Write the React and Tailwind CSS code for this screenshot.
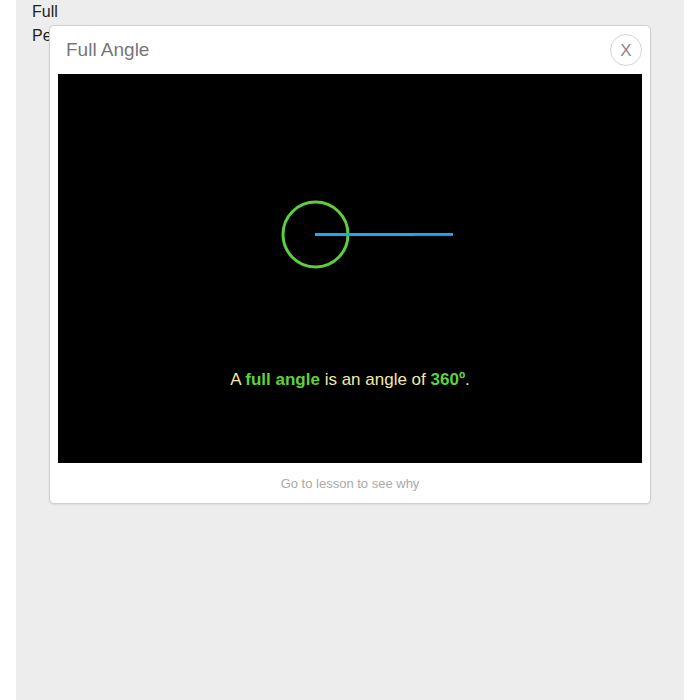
export default function App() {
  return (
    <div className="min-h-[700px] bg-white font-['Liberation_Sans',Arial,sans-serif]">
      <div className="relative mx-[16px] min-h-[700px] bg-[#ededed] pl-[16px] text-[16px] leading-[24px] text-[#222]">
        <div>Full</div>
        <div>Perigon</div>

        <div className="absolute left-[33px] top-[25px] w-[602px] rounded-[5px] border border-[#cfcfcf] bg-white shadow-[0_1px_2px_rgba(0,0,0,0.08)]">
          <div className="flex h-[48px] items-center justify-between pl-[16px] pr-[8px]">
            <h2 className="text-[19px] font-normal text-[#777]">Full Angle</h2>
            <button
              type="button"
              className="flex h-[32px] w-[32px] items-center justify-center rounded-full border border-[#d4d4d4] bg-white text-[17px] leading-none text-[#888]"
            >
              X
            </button>
          </div>

          <div className="mx-[8px] flex h-[389px] flex-col bg-black">
            <svg width="584" height="294" viewBox="0 0 584 294" className="block">
              <circle cx="257.5" cy="160.5" r="32.5" fill="none" stroke="#5ccf3a" strokeWidth="3" />
              <line x1="257" y1="160.5" x2="395" y2="160.5" stroke="#1ea6f2" strokeWidth="3" />
              <line x1="356" y1="161.5" x2="395" y2="161.5" stroke="#1890d8" strokeWidth="1" />
            </svg>
            <p className="text-center text-[17px] leading-[24px] text-[#f2e9a6]">
              A <span className="font-bold text-[#5fd23b]">full angle</span> is an angle of{" "}
              <span className="font-bold text-[#5fd23b]">360º</span>.
            </p>
          </div>

          <div className="flex h-[40px] items-center justify-center pt-[1px] text-[13px] text-[#aaa]">
            Go to lesson to see why
          </div>
        </div>
      </div>
    </div>
  );
}
